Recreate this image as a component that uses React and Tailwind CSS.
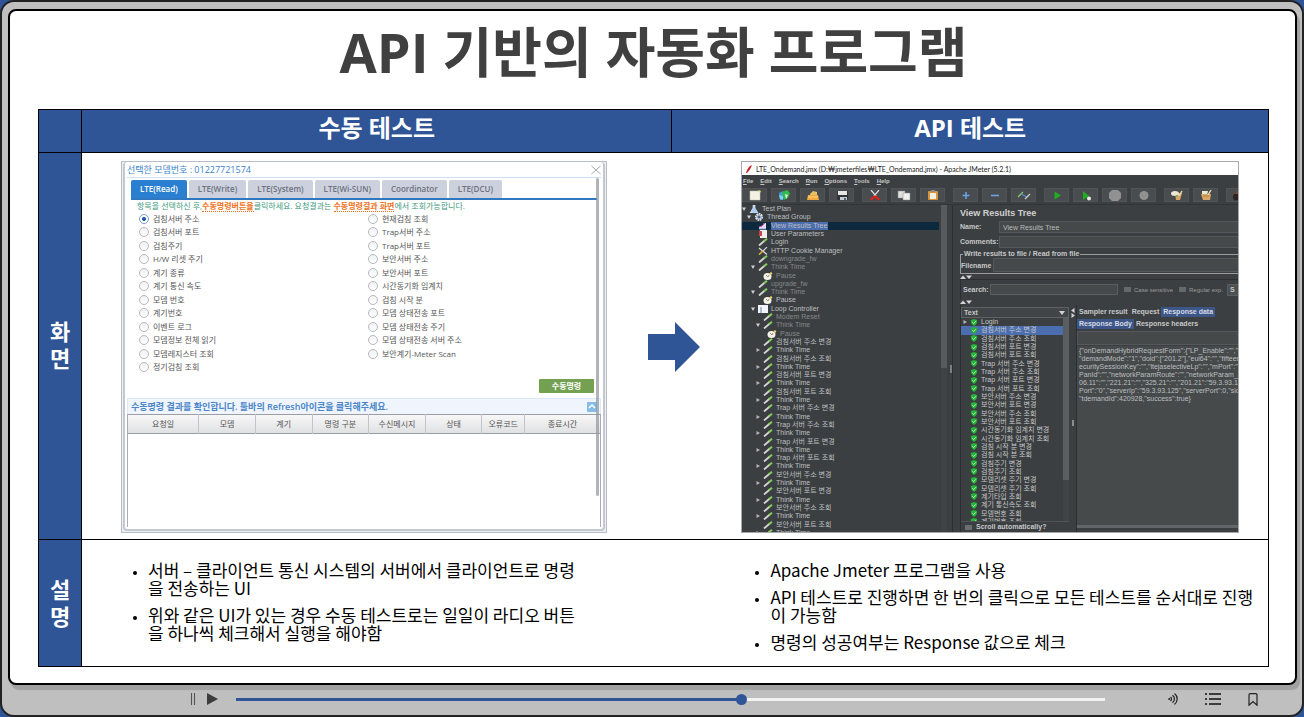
import { useState } from 'react';
import clsx from 'clsx';

const modemTabs = ['LTE(Read)', 'LTE(Write)', 'LTE(System)', 'LTE(Wi-SUN)', 'Coordinator', 'LTE(DCU)'];

const commands = [
  '검침서버 주소', '검침서버 포트', '검침주기', 'H/W 리셋 주기', '계기 종류', '계기 통신 속도',
  '모뎀 번호', '계기번호', '이벤트 로그', '모뎀정보 전체 읽기', '모뎀레지스터 조회', '정기검침 조회',
  '현재검침 조회', 'Trap서버 주소', 'Trap서버 포트', '보안서버 주소', '보안서버 포트', '시간동기화 임계치',
  '검침 시작 분', '모뎀 상태전송 포트', '모뎀 상태전송 주기', '모뎀 상태전송 서버 주소', '보안계기-Meter Scan',
];

const resultColumns = [
  { name: '요청일', width: 'w-[15%]' },
  { name: '모뎀', width: 'w-[12%]' },
  { name: '계기', width: 'w-[12%]' },
  { name: '명령 구분', width: 'w-[12%]' },
  { name: '수신메시지', width: 'w-[12%]' },
  { name: '상태', width: 'w-[12%]' },
  { name: '오류코드', width: 'w-[9%]' },
  { name: '종료시간', width: 'w-[16%]' },
];

const menus = ['File', 'Edit', 'Search', 'Run', 'Options', 'Tools', 'Help'];

const toolGroups = [
  ['new', 'templates', 'open', 'save'],
  ['cut', 'copy', 'paste'],
  ['plus', 'minus', 'toggle'],
  ['start', 'startNoPause', 'stop', 'shutdown'],
  ['clear', 'clearAll'],
  ['search'],
];

const samplers = [
  '검침서버 주소 변경', '검침서버 주소 조회', '검침서버 포트 변경', '검침서버 포트 조회',
  'Trap 서버 주소 변경', 'Trap 서버 주소 조회', 'Trap 서버 포트 변경', 'Trap 서버 포트 조회',
  '보안서버 주소 변경', '보안서버 포트 변경', '보안서버 주소 조회', '보안서버 포트 조회',
];

const tree = [
  { level: 0, icon: 'flask', label: 'Test Plan', arrow: 'down' },
  { level: 1, icon: 'gear', label: 'Thread Group', arrow: 'down' },
  { level: 2, icon: 'chart', label: 'View Results Tree', selected: true },
  { level: 2, icon: 'params', label: 'User Parameters' },
  { level: 2, icon: 'pipette', label: 'Login' },
  { level: 2, icon: 'tools', label: 'HTTP Cookie Manager' },
  { level: 2, icon: 'pipette', label: 'downgrade_fw', dim: true },
  { level: 2, icon: 'pipette', label: 'Think Time', dim: true, arrow: 'down' },
  { level: 3, icon: 'clock', label: 'Pause', dim: true },
  { level: 2, icon: 'pipette', label: 'upgrade_fw', dim: true },
  { level: 2, icon: 'pipette', label: 'Think Time', dim: true, arrow: 'down' },
  { level: 3, icon: 'clock', label: 'Pause' },
  { level: 2, icon: 'loop', label: 'Loop Controller', arrow: 'down' },
  { level: 3, icon: 'pipette', label: 'Modem Reset', dim: true },
  { level: 3, icon: 'pipette', label: 'Think Time', dim: true, arrow: 'down' },
  { level: 4, icon: 'clock', label: 'Pause', dim: true },
  ...samplers.flatMap((label) => [
    { level: 3, icon: 'pipette', label },
    { level: 3, icon: 'pipette', label: 'Think Time', arrow: 'right' },
  ]),
];

const results = [
  ...samplers,
  '시간동기화 임계치 변경', '시간동기화 임계치 조회', '검침 시작 분 변경', '검침 시작 분 조회',
  '검침주기 변경', '검침주기 조회', '모뎀리셋 주기 변경', '모뎀리셋 주기 조회',
  '계기타입 조회', '계기 통신속도 조회', '모뎀번호 조회', '계기번호 조회',
];

const responseBody = [
  '{"onDemandHybridRequestForm":{"LP_Enable":"","ar',
  '"demandMode":"1","doid":["201.2"],"eui64":"","fifteen":0',
  'ecuritySessionKey":"","ltejaselectiveLp":"","mPort":"","n',
  'PanId":"","networkParamRoute":"","networkParam_Ch',
  '06.11":"","221.21":"","325.21":"","201.21":"59.3.93.125"',
  'Port":"0","serverIp":"59.3.93.125","serverPort":0,"sid":"6',
  '"tdemandId":420928,"success":true}',
].join('\n');

const indent = ['pl-0', 'pl-[5px]', 'pl-[9px]', 'pl-[14px]', 'pl-[18px]'];

const toolDrawings = {
  new: (
    <>
      <path d="M2 1h10v9H2z" fill="#f3f1e4" stroke="#c9c7b8" strokeWidth=".5" />
      <path d="M10 0l3 1-1 2z" fill="#d9e27a" />
    </>
  ),
  templates: (
    <>
      <path d="M2 3l4-2 1 8-4 1z" fill="#3f9fd6" />
      <path d="M5 2l5-2 3 3-2 5-4 2z" fill="#2fbb45" />
      <path d="M2 5l4 1v4L3 9z" fill="#7fd0ea" />
      <path d="M8 4l3 1-2 4z" fill="#e9f6e4" />
    </>
  ),
  open: (
    <>
      <path d="M4 4l3-3 4 1v3H4z" fill="#e8c06a" />
      <path d="M2 5h10l1 5H1z" fill="#f0a93c" />
      <path d="M2 7h10" stroke="#ffd98e" strokeWidth="1" />
    </>
  ),
  save: (
    <>
      <rect x="2" y="1" width="11" height="9" rx="1" fill="#30343a" />
      <rect x="3" y="1" width="9" height="4" fill="#e6e6e6" />
      <rect x="5" y="7" width="7" height="3" fill="#c5ccd4" />
      <rect x="9" y="8" width="2" height="2" fill="#5a6069" />
    </>
  ),
  cut: (
    <>
      <path d="M3 0l5 6M11 0L6 6" stroke="#dcdcdc" strokeWidth="1.300" />
      <path d="M7 6l-3 3M7 6l3 3" stroke="#d8241f" strokeWidth="2" />
      <circle cx="3.500" cy="9" r="1.400" fill="#d8241f" />
      <circle cx="10.500" cy="9" r="1.400" fill="#d8241f" />
    </>
  ),
  copy: (
    <>
      <rect x="1" y="1" width="7" height="7" fill="#dededb" stroke="#8d8d8b" strokeWidth=".5" />
      <rect x="6" y="3" width="7" height="7" fill="#f0f0ed" stroke="#8d8d8b" strokeWidth=".5" />
    </>
  ),
  paste: (
    <>
      <rect x="2" y="1" width="10" height="9" rx="1" fill="#d5963b" />
      <rect x="4" y="3" width="6" height="6" fill="#f2efe2" />
      <rect x="5" y="0" width="4" height="2" fill="#8b8b8b" />
    </>
  ),
  plus: <path d="M7 2v7M3.500 5.500h7" stroke="#6aa5ea" strokeWidth="1.500" />,
  minus: <path d="M3 5.500h8" stroke="#6aa5ea" strokeWidth="1.500" />,
  toggle: (
    <>
      <path d="M1 7l5-5" stroke="#8ec96a" strokeWidth="1.200" />
      <path d="M4 4l6 3" stroke="#4e93d8" strokeWidth="1.200" />
      <path d="M8 9l5-5" stroke="#c8cfc4" strokeWidth="1.200" />
    </>
  ),
  start: <path d="M4.500 1.500L11 5.500 4.500 9.500z" fill="#1fae1f" />,
  startNoPause: (
    <>
      <path d="M4 1l6 5-6 4z" fill="#1fae1f" />
      <circle cx="10" cy="8.500" r="2" fill="#e8ece8" />
    </>
  ),
  stop: <path d="M4 0h6l3 3v5l-3 3H4L1 8V3z" fill="#919191" />,
  shutdown: <circle cx="7" cy="5.500" r="4.500" fill="#919191" />,
  clear: (
    <>
      <path d="M5 3h7l-2 7H6z" fill="#d8a765" />
      <ellipse cx="5" cy="3.500" rx="4" ry="2.500" fill="#ece9d2" />
      <path d="M9 6l3-5" stroke="#efdcae" strokeWidth="1.400" />
      <path d="M5 5l3 0 0 2-2-1z" fill="#6db95d" />
    </>
  ),
  clearAll: (
    <>
      <path d="M3 1h6l-1 4H3z" fill="#ece9d2" />
      <path d="M2 4h10l-1 6H4z" fill="#d8a765" />
      <path d="M9 5l3-5" stroke="#efdcae" strokeWidth="1.400" />
      <path d="M4 6h6" stroke="#b97f3d" />
    </>
  ),
  search: (
    <>
      <ellipse cx="4" cy="7" rx="3" ry="3.500" fill="#2a2422" />
      <ellipse cx="10" cy="7" rx="3" ry="3.500" fill="#2a2422" />
      <path d="M3 4l2-3h4l2 3z" fill="#7b4a33" />
    </>
  ),
};

const treeDrawings = {
  flask: <path d="M4 0h2v3l3 5H1l3-5z" fill="#a9cdf5" stroke="#eef5ff" strokeWidth=".6" />,
  gear: (
    <>
      <circle cx="5" cy="4" r="3.200" fill="none" stroke="#dfe8f3" strokeWidth="1.600" strokeDasharray="1.700 .7" />
      <circle cx="5" cy="4" r="2.200" fill="#46688f" stroke="#eef3f9" strokeWidth="1" />
    </>
  ),
  chart: (
    <>
      <path d="M1 7V5l3-1 2-3h2v6z" fill="#e7d9ef" />
      <path d="M1 5l3-1 3-3" stroke="#c354a8" strokeWidth="1" fill="none" />
      <path d="M1 7h7" stroke="#8fa2e0" strokeWidth="1" />
    </>
  ),
  params: (
    <>
      <rect x="2" y="0" width="7" height="8" fill="#f1eeee" />
      <path d="M1 1h3v5H1z" fill="#c8474d" />
    </>
  ),
  pipette: (
    <>
      <path d="M1 7.500L6.500 2.800" stroke="#d6d9d3" strokeWidth="1.800" />
      <path d="M5.800 3.400L9 .8" stroke="#86cb5e" strokeWidth="2" />
    </>
  ),
  tools: (
    <>
      <path d="M1 1l8 6.500" stroke="#dcdcdc" strokeWidth="1.300" />
      <path d="M9 0L5 4" stroke="#c9c9c9" strokeWidth="1.200" />
      <path d="M5 4L1 7.500" stroke="#e2b53e" strokeWidth="1.600" />
    </>
  ),
  clock: (
    <>
      <ellipse cx="4.500" cy="4.500" rx="4" ry="3.500" fill="#f4f1e4" />
      <path d="M3 3l2 2 1-2" stroke="#6a6a60" strokeWidth=".7" fill="none" />
      <circle cx="8" cy="1.500" r="1.200" fill="#e6cf5c" />
    </>
  ),
  loop: (
    <>
      <rect x="0" y="0" width="10" height="8" fill="#f2f4f7" />
      <path d="M3 2v6" stroke="#6d95cf" strokeWidth="1.200" />
    </>
  ),
};

function Twist({ dir }) {
  return (
    <svg viewBox="0 0 4 4" className="h-1 w-1 shrink-0">
      {dir === 'down' && <path d="M0 .5h4L2 4z" fill="#d2d2d2" />}
      {dir === 'right' && <path d="M.5 0v4L4 2z" fill="#b4b4b4" />}
    </svg>
  );
}

function Shield() {
  return (
    <svg viewBox="0 0 8 8" className="h-[7px] w-2 shrink-0">
      <path d="M4 0l3.600 1.200C7.800 4 7 6.500 4 8 1 6.500.2 4 .4 1.200z" fill="#25b33a" />
      <path d="M2.200 3.800l1.400 1.400 2.400-2.600" stroke="#d7f5d9" strokeWidth="1" fill="none" />
    </svg>
  );
}

function FoldArrows() {
  return (
    <svg viewBox="0 0 12 4" className="h-1 w-3">
      <path d="M0 4l3-3.500L6 4z M6 .5h6L9 4z" fill="#d2d2d2" />
    </svg>
  );
}

function ManualDialog() {
  const [tab, setTab] = useState(0);
  const [picked, setPicked] = useState(0);

  return (
    <div className="h-[372px] border border-[#b9bdc7] bg-[#eceef2] pl-px pr-px pb-px">
      <div className="relative flex h-full flex-col rounded-sm border-x-2 border-b-2 border-[#c3c7d0] bg-white px-0.5 text-[8px] text-[#555]">
        <div className="flex h-4 items-center justify-between border-b border-[#cfe0f4]">
          <p className="text-[9px] text-[#3b83cc]">선택한 모뎀번호 : 01227721574</p>
          <button aria-label="닫기">
            <svg viewBox="0 0 10 10" className="h-2.5 w-2.5" stroke="#a5a8ad" strokeWidth="1">
              <path d="M.5 1l9 8M9.500 1l-9 8" />
            </svg>
          </button>
        </div>

        <div className="ml-1 mr-1 mt-0.5 flex gap-0.5 border-b-2 border-[#2f78c0]">
          {modemTabs.map((name, i) => (
            <button
              key={name}
              onClick={() => setTab(i)}
              className={clsx(
                'h-[18px] rounded-t-xs px-[9px] font-semibold',
                i === tab ? 'bg-[#2a7fd0] text-white' : 'bg-[#cdd1de] text-[#6c7280]'
              )}
            >
              {name}
            </button>
          ))}
        </div>

        <p className="ml-2.5 whitespace-nowrap leading-3 text-[#3f9a80]">
          항목을 선택하신 후,
          <b className="border-b border-dotted border-[#f07020] text-[#f07020]">수동명령버튼을</b>
          클릭하세요. 요청결과는{' '}
          <b className="border-b border-dotted border-[#f07020] text-[#f07020]">수동명령결과 화면</b>
          에서 조회가능합니다.
        </p>

        <div className="ml-3 mr-1 grid h-[162px] grid-flow-col grid-cols-2 grid-rows-12">
          {commands.map((name, i) => (
            <label key={name} className="flex items-center gap-1">
              <input
                type="radio"
                name="command"
                checked={i === picked}
                onChange={() => setPicked(i)}
                className="h-2.5 w-2.5 appearance-none rounded-full border border-[#b4b7bc] bg-linear-to-b from-[#f1f1f1] to-white bg-clip-padding checked:border-[#7f9dbd] checked:bg-radial checked:from-[#1d5fae] checked:from-30% checked:to-white checked:to-40%"
              />
              {name}
            </label>
          ))}
        </div>

        <button className="mr-[7px] mt-[5px] h-[14px] w-[55px] self-end rounded-[1px] bg-[#74a052] font-bold text-white">
          수동명령
        </button>

        <div className="mt-[5px] flex h-4 items-center justify-between border border-b-0 border-[#dce6f6] bg-[#eff4fd] px-[3px]">
          <p className="text-[9px] font-semibold text-[#4a86c8]">
            수동명령 결과를 확인합니다. 툴바의 Refresh아이콘을 클릭해주세요.
          </p>
          <button aria-label="접기" className="flex h-2.5 w-2.5 items-center justify-center rounded-[1px] bg-[#86bce8]">
            <svg viewBox="0 0 8 5" className="h-[5px] w-2" stroke="#fff" strokeWidth="1.500" fill="none">
              <path d="M1 4l3-3 3 3" />
            </svg>
          </button>
        </div>
        <div className="mb-0.5 flex-1 border-x border-[#a9adb5]">
          <table className="w-full table-fixed border-y border-[#9a9da3] bg-linear-to-b from-[#f8f8f8] to-[#dfe0e2]">
            <thead>
              <tr>
                {resultColumns.map((col) => (
                  <th
                    key={col.name}
                    className={clsx('h-[19px] border-r border-[#c2c4c8] font-normal last:border-r-0', col.width)}
                  >
                    {col.name}
                  </th>
                ))}
              </tr>
            </thead>
          </table>
        </div>

        {/* scroll thumb over the dialog */}
        <div className="absolute right-1 top-4 h-[318px] w-[3px] rounded-full bg-[#8f949c]/70" />
      </div>
    </div>
  );
}

function ToolButton({ name }) {
  return (
    <button
      aria-label={name}
      className="flex h-[14px] w-[25px] shrink-0 items-center justify-center border border-[#505456] bg-[#494d4f]"
    >
      <svg viewBox="0 0 14 11" className="h-[11px] w-[14px]" fill="none">
        {toolDrawings[name]}
      </svg>
    </button>
  );
}

function TestTree() {
  return (
    <div className="flex w-[205px] shrink-0 overflow-hidden">
      <ul className="grid h-[332px] flex-1 auto-rows-fr text-[#bdbfc0]">
        {tree.map((node, i) => (
          <li
            key={i}
            className={clsx(
              'flex items-center gap-[3px] whitespace-nowrap',
              indent[node.level],
              node.selected && 'bg-[#0d293e]'
            )}
          >
            <Twist dir={node.arrow} />
            <svg viewBox="0 0 10 8" className="h-2 w-2.5 shrink-0" fill="none">
              {treeDrawings[node.icon]}
            </svg>
            <span
              className={clsx(
                node.selected && 'bg-[#4b6eaf] pr-px leading-2',
                node.dim && 'text-[#858788]'
              )}
            >
              {node.label}
            </span>
          </li>
        ))}
      </ul>
      <div className="ml-0.5 w-[6px] bg-[#3f4345]">
        <div className="h-[163px] bg-[#585b5d]" />
      </div>
    </div>
  );
}

function ResultPanel() {
  return (
    <div className="flex min-w-0 flex-1 flex-col overflow-hidden pl-[7px]">
      <h2 className="mt-0.5 text-[9px] font-bold leading-3 text-[#d0d0d0]">View Results Tree</h2>
      <div className="mt-0.5 grid grid-cols-[39px_1fr] items-center gap-y-[3px]">
        <label htmlFor="name" className="font-bold">Name:</label>
        <input
          id="name"
          defaultValue="View Results Tree"
          className="h-3 min-w-0 border border-r-0 border-[#55585a] bg-[#45494a] px-[3px] text-[#bbb]"
        />
        <label htmlFor="comments" className="font-bold">Comments:</label>
        <input id="comments" className="h-3 min-w-0 border border-r-0 border-[#55585a] bg-[#45494a]" />
      </div>

      <fieldset className="mt-0.5 flex items-center border border-r-0 border-[#9a9c9d]">
        <legend className="ml-0.5 px-px font-bold leading-2">Write results to file / Read from file</legend>
        <label htmlFor="file" className="w-8 font-bold">Filename</label>
        <input id="file" className="mb-px h-3.5 min-w-0 flex-1 border border-r-0 border-[#55585a] bg-[#45494a]" />
      </fieldset>
      <div className="flex h-[6px] items-center border-b border-[#2c2e30]">
        <FoldArrows />
      </div>

      <div className="flex h-[19px] items-center border-l border-[#2c2e30]">
        <label htmlFor="query" className="w-[29px] shrink-0 pl-0.5 font-bold">Search:</label>
        <input id="query" className="h-[11px] w-[128px] shrink-0 border border-[#5a5e60] bg-[#45494a]" />
        <label className="ml-1.5 flex shrink-0 items-center gap-[3px] whitespace-nowrap text-[6px] text-[#9a9c9d]">
          <input type="checkbox" className="h-[5px] w-[7px] appearance-none bg-[#65696b]" />
          Case sensitive
        </label>
        <label className="ml-1.5 flex shrink-0 items-center gap-[3px] whitespace-nowrap text-[6px] text-[#9a9c9d]">
          <input type="checkbox" className="h-[5px] w-[7px] appearance-none bg-[#65696b]" />
          Regular exp.
        </label>
        <button
          aria-label="Search"
          className="ml-1 h-3 w-10 shrink-0 border border-r-0 border-[#5a5e60] bg-[#4c5052] pl-0.5 text-left font-bold"
        >
          S
        </button>
      </div>
      <div className="flex h-[6px] items-center">
        <FoldArrows />
      </div>

      <div className="flex min-h-0 flex-1">
        <div className="flex w-[109px] shrink-0 flex-col border-l border-[#2c2e30]">
          <div className="relative mt-0.5 flex shrink-0">
            <select
              aria-label="Renderer"
              className="h-[11px] w-full appearance-none border border-[#5e6264] bg-[#414547] pl-0.5 font-bold leading-2"
            >
              <option>Text</option>
            </select>
            <svg viewBox="0 0 6 4" className="pointer-events-none absolute right-1 top-1 h-1 w-1.5">
              <path d="M0 0h6L3 4z" fill="#d2d2d2" />
            </svg>
          </div>
          <div className="flex min-h-0 flex-1 overflow-hidden">
            <ul className="grid h-[208px] flex-1 auto-rows-fr">
              <li className="flex items-center gap-[3px] pl-0.5">
                <Twist dir="right" />
                <Shield />
                Login
              </li>
              {results.map((label, i) => (
                <li
                  key={label}
                  className={clsx(
                    'flex items-center gap-[3px] whitespace-nowrap pl-[9px]',
                    i === 0 && 'bg-[#4b6eaf]'
                  )}
                >
                  <Shield />
                  {label}
                </li>
              ))}
            </ul>
            <div className="w-[6px] bg-[#404446]">
              <div className="h-[162px] bg-[#5b5e60]" />
            </div>
          </div>
          <label className="flex h-[11px] shrink-0 items-center gap-1 whitespace-nowrap border-t border-[#505355] pl-1 font-bold">
            <input type="checkbox" className="h-[5px] w-[7px] appearance-none bg-[#6a6e70]" />
            Scroll automatically?
          </label>
        </div>

        <div className="flex w-[8px] shrink-0 flex-col items-center border-r border-[#2c2e30] pt-[3px]">
          <svg viewBox="0 0 4 10" className="h-2.5 w-1" fill="#d2d2d2">
            <path d="M3.500 0v5L0 2.500z M.5 5v5L4 7.500z" />
          </svg>
          <div className="mt-[102px] h-1.5 w-0.5 bg-[#8b8e90]" />
        </div>

        <div className="flex min-w-0 flex-1 flex-col">
          <div className="mt-0.5 flex h-[10px] shrink-0 items-center font-bold">
            <button className="px-0.5">Sampler result</button>
            <button className="px-0.5">Request</button>
            <button className="h-full bg-[#3d5688] px-0.5 text-[#d6dbe6]">Response data</button>
          </div>
          <div className="mt-0.5 flex h-[10px] shrink-0 items-center font-bold">
            <button className="h-full bg-[#3d5688] px-0.5 text-[#d6dbe6]">Response Body</button>
            <button className="px-0.5">Response headers</button>
          </div>
          <input
            aria-label="Find"
            className="mt-0.5 h-3.5 border border-r-0 border-[#55585a] bg-[#45494a]"
          />
          <textarea
            aria-label="Response body"
            readOnly
            wrap="off"
            value={responseBody}
            className="mt-px flex-1 resize-none overflow-hidden bg-[#464a4b] pt-px pl-0.5 leading-2 text-[#bdbfc0]"
          />
          <div className="h-[3px] bg-[#626668]" />
          <div className="h-1" />
        </div>
      </div>
    </div>
  );
}

function JMeterWindow() {
  return (
    <div className="flex h-[372px] min-w-0 flex-col overflow-hidden border border-[#a8a8a8] bg-[#3c3f41] font-['Liberation_Sans','Noto_Sans_CJK_KR',sans-serif] text-[7px] leading-2 text-[#c6c7c8]">
      <div className="flex h-[13px] shrink-0 items-center whitespace-nowrap bg-white pl-1 font-['Lato','Noto_Sans_CJK_KR',sans-serif] text-[#222]">
        <svg viewBox="0 0 6 8" className="mr-1 h-2 w-1.5">
          <path d="M0 8C1 4 3 1 6 0 5 3 3 6 1 8z" fill="#d22128" />
        </svg>
        LTE_Ondemand.jmx (D:₩jmeterfiles₩LTE_Ondemand.jmx) - Apache JMeter (5.2.1)
      </div>
      <nav className="flex h-[11px] shrink-0 items-center gap-[7px] pl-px text-[6px] font-bold">
        {menus.map((name) => (
          <button key={name}>
            <u>{name[0]}</u>
            {name.slice(1)}
          </button>
        ))}
      </nav>
      <div className="flex h-[18px] shrink-0 items-center gap-2">
        {toolGroups.map((group) => (
          <div key={group[0]} className="flex gap-1">
            {group.map((name) => (
              <ToolButton key={name} name={name} />
            ))}
          </div>
        ))}
      </div>
      <div className="flex min-h-0 flex-1 border-t border-[#323537]">
        <TestTree />
        <div className="flex w-[6px] shrink-0 items-center justify-end border-r border-[#2c2e30]">
          <div className="h-2 w-0.5 bg-[#7d8082]" />
        </div>
        <ResultPanel />
      </div>
    </div>
  );
}

function PlayerBar() {
  const [position, setPosition] = useState(583);
  const pct = position / 10;

  return (
    <div className="flex flex-1 items-center pb-0.5 pl-[188px] pr-11">
      <button aria-label="일시정지" className="mr-2.5">
        <svg viewBox="0 0 6 12" className="h-3 w-1.5" stroke="#555" strokeWidth="1.100">
          <path d="M1.500 0v12M4.500 0v12" />
        </svg>
      </button>
      <button aria-label="재생" className="mr-[18px]">
        <svg viewBox="0 0 12 12" className="h-3 w-3" fill="#3d3d3d">
          <path d="M1 0l11 6-11 6z" />
        </svg>
      </button>
      <input
        type="range"
        aria-label="재생 위치"
        min="0"
        max="1000"
        value={position}
        onChange={(e) => setPosition(Number(e.target.value))}
        style={{ backgroundImage: `linear-gradient(to right, #2f5597 ${pct}%, #f2f2f2 ${pct}%)` }}
        className="h-[11px] flex-1 appearance-none bg-[length:100%_3px] bg-center bg-no-repeat [&::-webkit-slider-thumb]:h-[11px] [&::-webkit-slider-thumb]:w-[11px] [&::-webkit-slider-thumb]:appearance-none [&::-webkit-slider-thumb]:rounded-full [&::-webkit-slider-thumb]:bg-[#2f5597]"
      />
      <button aria-label="소리" className="ml-[63px]">
        <svg viewBox="0 0 10 12" className="h-3 w-2.5" stroke="#222" strokeWidth="1.200" fill="none">
          <path d="M2.500 4a2.500 2.500 0 0 1 0 4M4.500 2.300a4.500 4.500 0 0 1 0 7.400M6.500.6a6.800 6.800 0 0 1 0 10.800" />
          <circle cx="1.200" cy="6" r="1" fill="#222" stroke="none" />
        </svg>
      </button>
      <button aria-label="목록" className="ml-[27px]">
        <svg viewBox="0 0 16 12" className="h-3 w-4" stroke="#111" strokeWidth="1.500">
          <path d="M0 1h2M4 1h12M0 6h2M4 6h12M0 11h2M4 11h12" />
        </svg>
      </button>
      <button aria-label="책갈피" className="ml-[27px]">
        <svg viewBox="0 0 10 13" className="h-[13px] w-2.5" stroke="#222" strokeWidth="1.200" fill="none">
          <path d="M1 2q0-1.300 1.300-1.300h5.400Q9 .7 9 2v10.200L5 8.500l-4 3.700z" />
        </svg>
      </button>
    </div>
  );
}

export default function App() {
  return (
    <div className="min-h-screen bg-[#2f5597] font-['Open_Sans','Noto_Sans_CJK_KR',sans-serif]">
      <div className="flex min-h-screen flex-col rounded-[14px] border-2 border-[#222] bg-[#bfbfbf]">
        <main className="ml-1.5 mr-[5px] mt-[7px] rounded-lg border-2 border-black bg-white pb-4 pl-7 pr-[26px] shadow-[3px_5px_1px_#a0a0a0]">
          <h1 className="pb-4 text-center text-[54px] font-bold leading-[82px] text-[#404040]">
            API 기반의 자동화 프로그램
          </h1>

          <table className="w-full table-fixed border-collapse">
            <colgroup>
              <col className="w-[43px]" />
              <col className="w-[48%]" />
              <col />
            </colgroup>
            <thead>
              <tr className="h-[43px] bg-[#2f5597] text-[24px] leading-8 text-white">
                <td className="border border-black" />
                <th className="border border-black pb-1.5">수동 테스트</th>
                <th className="border border-black pb-1.5">API 테스트</th>
              </tr>
            </thead>
            <tbody>
              <tr>
                <th className="border border-black bg-[#2f5597] px-2.5 pb-0.5 text-[22px] leading-[27px] text-white">화면</th>
                <td colSpan={2} className="border border-black p-0">
                  <div className="grid grid-cols-[486fr_134fr_498fr] items-center pb-1.5 pl-[39px] pr-[29px] pt-2">
                    <ManualDialog />
                    <svg viewBox="0 0 52 50" className="mx-auto h-[50px] w-[52px]" fill="#2f5597">
                      <path d="M0 12h27V0l25 25-25 25V38H0z" />
                    </svg>
                    <JMeterWindow />
                  </div>
                </td>
              </tr>
              <tr className="h-[127px]">
                <th className="border border-black bg-[#2f5597] px-2.5 text-[22px] leading-[27px] text-white">설명</th>
                <td
                  colSpan={2}
                  className="border border-black p-0 pt-[21px] align-top font-['Noto_Sans_CJK_KR',sans-serif] text-[17px] leading-[18px] text-black"
                >
                  <div className="grid grid-cols-[434fr_487fr] items-start gap-[188px] pl-[66px] pr-2.5">
                    <ul className="list-disc space-y-[9px] marker:text-[11px]">
                      <li>서버 – 클라이언트 통신 시스템의 서버에서 클라이언트로 명령을 전송하는 UI</li>
                      <li>위와 같은 UI가 있는 경우 수동 테스트로는 일일이 라디오 버튼을 하나씩 체크해서 실행을 해야함</li>
                    </ul>
                    <ul className="list-disc space-y-[9px] marker:text-[11px]">
                      <li>Apache Jmeter 프로그램을 사용</li>
                      <li>API 테스트로 진행하면 한 번의 클릭으로 모든 테스트를 순서대로 진행이 가능함</li>
                      <li>명령의 성공여부는 Response 값으로 체크</li>
                    </ul>
                  </div>
                </td>
              </tr>
            </tbody>
          </table>
        </main>
        <PlayerBar />
      </div>
    </div>
  );
}
